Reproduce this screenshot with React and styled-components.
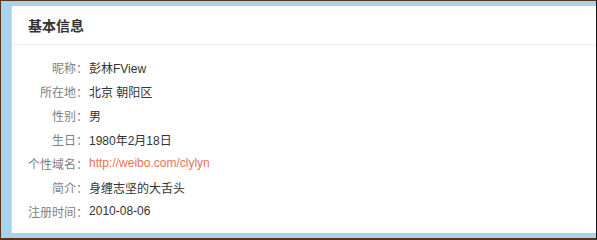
import styled, { createGlobalStyle } from "styled-components";

const GlobalStyle = createGlobalStyle`
  html, body {
    margin: 0;
    padding: 0;
    background: #fff;
  }
`;

const Frame = styled.div`
  box-sizing: border-box;
  width: 597px;
  height: 240px;
  border: 1px solid #5a3418;
  border-bottom-width: 2px;
  border-right-color: #111;
  background: #a9d3ec;
  padding: 5px 0 0 11px;
  font-family: "Liberation Sans", "Noto Sans CJK SC", sans-serif;
`;

const Panel = styled.div`
  box-sizing: border-box;
  height: 227px;
  background: #fff;
  box-shadow: -1px 0 0 #c4def0;
`;

const Header = styled.div`
  height: 38px;
  display: flex;
  align-items: center;
  padding-left: 16px;
  border-bottom: 1px solid #ececec;
  font-size: 14px;
  font-weight: bold;
  color: #333;
`;

const List = styled.div`
  display: flex;
  flex-direction: column;
  padding: 10px 0 0 16px;
`;

const Row = styled.div`
  display: flex;
  align-items: center;
  height: 24px;
  font-size: 12px;
  white-space: nowrap;
`;

const Label = styled.span`
  flex: 0 0 60px;
  text-align: right;
  color: #808080;
`;

const Value = styled.span`
  margin-left: 1px;
  color: ${(p) => (p.$link ? "#eb7350" : "#333")};
`;

const rows = [
  ["昵称", "彭林FView"],
  ["所在地", "北京 朝阳区"],
  ["性别", "男"],
  ["生日", "1980年2月18日"],
  ["个性域名", "http://weibo.com/clylyn", true],
  ["简介", "身缠志坚的大舌头"],
  ["注册时间", "2010-08-06"],
];

export default function App() {
  return (
    <>
      <GlobalStyle />
      <Frame>
        <Panel>
          <Header>基本信息</Header>
          <List>
            {rows.map(([k, v, link]) => (
              <Row key={k}>
                <Label>{k}：</Label>
                <Value $link={link}>{v}</Value>
              </Row>
            ))}
          </List>
        </Panel>
      </Frame>
    </>
  );
}
